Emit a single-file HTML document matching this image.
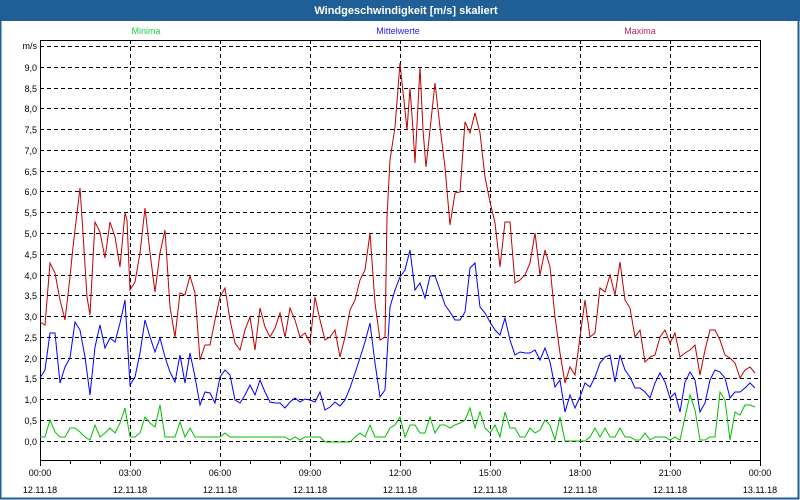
<!DOCTYPE html>
<html><head><meta charset="utf-8"><style>
html,body{margin:0;padding:0;background:#fff}
svg{display:block}
text{font-family:"Liberation Sans",sans-serif}
</style></head><body>
<svg width="800" height="500" viewBox="0 0 800 500" xmlns="http://www.w3.org/2000/svg">
<rect x="0" y="0" width="800" height="500" fill="#fff"/>
<rect x="0" y="0" width="800" height="21" fill="#1f5f96"/>
<rect x="0.5" y="20" width="798" height="478.5" fill="none" stroke="#1f5f96" stroke-width="2"/>
<text x="406" y="14" font-size="11" font-weight="bold" fill="#fff" text-anchor="middle">Windgeschwindigkeit [m/s] skaliert</text>
<text x="146" y="34" font-size="9" fill="#22cc44" text-anchor="middle">Minima</text>
<text x="398" y="34" font-size="9" fill="#2222ee" text-anchor="middle">Mittelwerte</text>
<text x="640" y="34" font-size="9" fill="#bb2266" text-anchor="middle">Maxima</text>
<g stroke="#000" stroke-width="1" stroke-dasharray="4,3" fill="none">
<path d="M40 46.5H760M40 67.5H760M40 88.5H760M40 108.5H760M40 129.5H760M40 150.5H760M40 171.5H760M40 191.5H760M40 212.5H760M40 233.5H760M40 254.5H760M40 275.5H760M40 295.5H760M40 316.5H760M40 337.5H760M40 358.5H760M40 378.5H760M40 399.5H760M40 420.5H760M40 441.5H760"/>
<path d="M130.5 40V460M220.5 40V460M310.5 40V460M400.5 40V460M490.5 40V460M580.5 40V460M670.5 40V460"/>
</g>
<path d="M40.5 40V460.5H760.5V40.5H40.5" fill="none" stroke="#000" stroke-width="1"/>
<path d="M40.5 460v6M70.5 460v4M100.5 460v4M130.5 460v6M160.5 460v4M190.5 460v4M220.5 460v6M250.5 460v4M280.5 460v4M310.5 460v6M340.5 460v4M370.5 460v4M400.5 460v6M430.5 460v4M460.5 460v4M490.5 460v6M520.5 460v4M550.5 460v4M580.5 460v6M610.5 460v4M640.5 460v4M670.5 460v6M700.5 460v4M730.5 460v4M760.5 460v6" stroke="#000"/>
<g font-size="9" fill="#000" text-anchor="end">
<text x="37" y="49">m/s</text>
<text x="37" y="71">9,0</text><text x="37" y="92">8,5</text><text x="37" y="112">8,0</text><text x="37" y="133">7,5</text><text x="37" y="154">7,0</text><text x="37" y="175">6,5</text><text x="37" y="195">6,0</text><text x="37" y="216">5,5</text><text x="37" y="237">5,0</text><text x="37" y="258">4,5</text><text x="37" y="279">4,0</text><text x="37" y="299">3,5</text><text x="37" y="320">3,0</text><text x="37" y="341">2,5</text><text x="37" y="362">2,0</text><text x="37" y="382">1,5</text><text x="37" y="403">1,0</text><text x="37" y="424">0,5</text><text x="37" y="445">0,0</text>
</g>
<g font-size="9" fill="#000" text-anchor="middle">
<text x="40" y="476">00:00</text><text x="40" y="493">12.11.18</text>
<text x="130" y="476">03:00</text><text x="130" y="493">12.11.18</text>
<text x="220" y="476">06:00</text><text x="220" y="493">12.11.18</text>
<text x="310" y="476">09:00</text><text x="310" y="493">12.11.18</text>
<text x="400" y="476">12:00</text><text x="400" y="493">12.11.18</text>
<text x="490" y="476">15:00</text><text x="490" y="493">12.11.18</text>
<text x="580" y="476">18:00</text><text x="580" y="493">12.11.18</text>
<text x="670" y="476">21:00</text><text x="670" y="493">12.11.18</text>
<text x="760" y="476">00:00</text><text x="760" y="493">13.11.18</text>
</g>
<polyline fill="none" stroke="#c00000" stroke-width="1" points="40,322 45,325 50,263 55,273 60,300 65,320 70,277 73,247 80,188 83,233 87,297 90,315 95,222 100,232 105,258 110,222 115,237 120,267 125,213 127,220 130,290 135,282 140,253 145,208 150,253 155,292 160,253 165,230 170,307 175,337 180,293 185,295 190,276 195,293 200,360 205,345 210,345 215,320 220,297 225,288 230,320 235,343 240,350 245,330 250,317 255,350 260,308 265,327 270,337 275,328 280,313 285,337 290,308 295,320 300,337 305,333 310,343 315,297 320,320 325,340 330,337 335,330 340,357 345,337 350,310 355,300 360,280 365,270 370,233 375,303 380,340 385,337 387,217 390,160 395,127 400,63 402,83 405,110 407,130 410,88 413,130 415,163 420,67 423,130 426,167 430,130 435,83 440,127 445,167 450,225 455,193 460,192 465,122 470,133 475,113 480,133 485,177 490,202 495,223 500,267 505,222 510,222 515,283 520,280 525,275 530,263 535,233 540,275 545,250 550,267 555,317 560,353 565,383 570,367 575,375 580,337 585,300 590,337 595,333 600,288 605,292 610,275 615,295 620,262 625,300 630,308 635,337 640,330 645,362 650,357 655,355 660,337 665,330 670,343 675,333 680,357 685,353 690,350 695,345 700,375 705,350 710,330 715,330 720,340 725,355 730,358 735,363 740,378 745,370 750,367 755,373"/>
<polyline fill="none" stroke="#0000ff" stroke-width="1" points="40,378 45,370 50,333 55,333 60,383 65,367 70,358 75,322 80,330 85,357 90,395 95,347 100,325 105,348 110,338 115,342 120,323 125,300 130,385 135,377 140,353 145,320 150,337 155,352 160,338 165,357 170,372 175,382 180,355 185,383 190,353 195,377 200,405 205,392 210,393 215,403 220,377 225,370 230,375 235,400 240,403 245,395 250,385 255,395 260,380 265,392 270,402 275,403 280,403 285,408 290,402 295,398 300,402 305,399 310,400 315,402 320,392 325,410 330,407 335,402 340,406 345,400 350,388 355,373 360,358 365,342 370,323 375,363 380,397 385,390 390,307 395,290 400,277 405,270 410,250 415,290 420,283 425,298 430,276 435,276 440,290 445,305 450,312 455,320 460,320 465,312 470,268 475,263 480,307 485,313 490,322 495,330 500,335 505,318 510,340 515,355 520,352 525,353 530,353 535,350 540,360 545,348 550,362 555,387 560,380 565,412 570,395 575,408 580,397 585,383 590,387 595,377 600,363 605,357 610,355 615,382 620,355 625,370 630,377 635,388 640,388 645,392 650,398 655,383 660,373 665,382 670,398 675,393 680,412 685,382 690,372 695,380 700,412 705,403 710,380 715,370 720,372 725,378 730,398 735,392 740,392 745,388 750,383 755,388"/>
<polyline fill="none" stroke="#00c000" stroke-width="1" points="40,437 45,437 50,420 55,432 60,437 65,437 70,428 75,428 80,432 85,437 90,440 95,425 100,437 105,433 110,428 115,433 120,423 125,408 130,437 135,437 140,433 145,417 150,423 155,427 160,405 165,437 170,437 175,437 180,422 185,437 190,428 195,437 220,437 225,433 230,437 285,437 290,440 295,437 300,440 305,437 320,437 325,442 350,442 355,437 360,433 365,437 370,425 375,437 385,437 390,428 395,425 400,417 405,437 410,425 415,425 420,433 425,433 430,417 435,433 440,425 445,425 450,428 455,425 460,423 465,420 470,408 475,428 480,412 485,428 490,433 495,425 500,437 505,412 510,428 515,428 520,437 525,437 530,428 535,433 540,430 545,420 550,425 555,440 560,417 565,441 585,441 590,437 595,428 600,437 605,428 610,437 615,437 620,428 625,437 630,437 635,440 640,440 645,433 650,440 655,437 665,437 670,440 675,437 680,440 685,417 690,395 695,410 700,440 705,440 710,437 715,437 720,392 725,400 730,440 735,412 740,415 745,405 750,405 755,407"/>
</svg>
</body></html>
